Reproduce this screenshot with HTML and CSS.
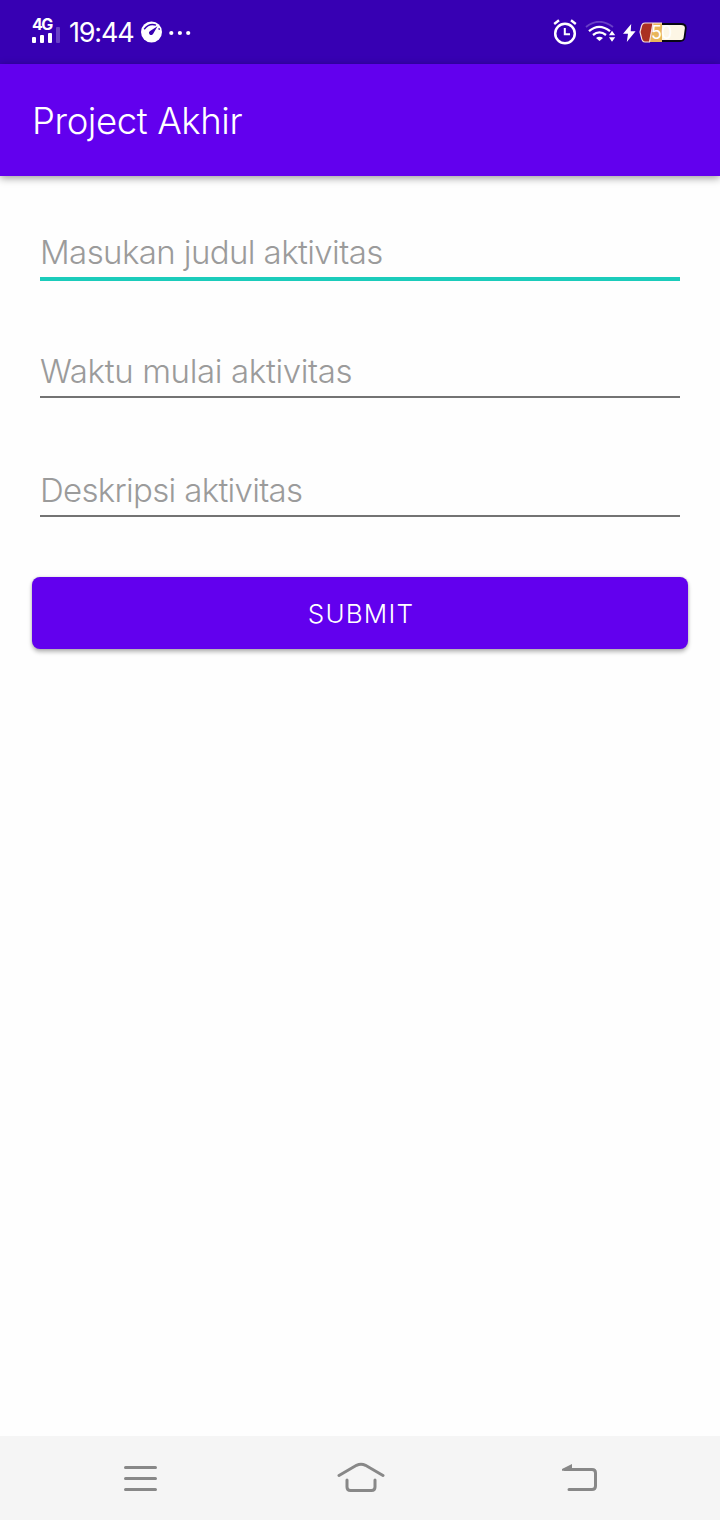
FILE: index.html
```html
<!DOCTYPE html>
<html lang="id">
<head>
<meta charset="utf-8">
<title>Project Akhir</title>
<link rel="stylesheet" href="styles.css">
</head>
<body>
<div class="screen">
  <div class="status-bar">
    <div class="status-left">
      <div class="network">
        <span class="network-type">4G</span>
        <svg class="signal" width="30" height="16" viewBox="0 0 30 16"><g fill="#fff"><rect x="0" y="10" width="4" height="6" rx="1"/><rect x="8" y="8" width="4" height="8" rx="1"/><rect x="16" y="6" width="4" height="10" rx="1"/></g><rect x="24" y="0" width="4" height="16" rx="1" fill="#fff" opacity=".25"/></svg>
      </div>
      <span class="clock">19:44</span>
      <svg class="gauge" width="22" height="22" viewBox="0 0 22 22"><circle cx="10.5" cy="11" r="10.5" fill="#fff"/><path d="M3.2 8.2Q8.3 1.7 15 4.2M17.8 7.2L18.5 8.7" fill="none" stroke="#3700b3" stroke-width="1.4"/><path d="M16.5 5.2L12.2 12.7A2.2 2.2 0 1 1 9.1 9.9Z" fill="#3700b3"/></svg>
      <svg class="dots" width="22" height="6" viewBox="0 0 22 6" fill="#fff"><circle cx="2.3" cy="3" r="2.1"/><circle cx="10.9" cy="3" r="2.1"/><circle cx="19.2" cy="3" r="2.1"/></svg>
    </div>
    <div class="status-right">
      <svg class="alarm" width="24" height="26" viewBox="0 0 24 26" fill="none" stroke="#fff"><circle cx="12" cy="14.5" r="9.8" stroke-width="2.5"/><path d="M11.8 9V15.2H17" stroke-width="2"/><path d="M1.2 5L6 1.3M22.8 5L18 1.3" stroke-width="2.4"/></svg>
      <svg class="wifi" width="32" height="22" viewBox="0 0 32 22" fill="none" stroke="#fff"><path d="M1 6Q14-4.5 28 6" stroke-width="1.8" opacity=".25"/><path d="M4 10.2Q14 1.5 25 10.2" stroke-width="2.3"/><path d="M8 14Q14.3 8.8 21 14" stroke-width="2.3"/><path d="M11 17Q14.5 14.5 18 17L14.5 20Z" fill="#fff" stroke="none"/><path d="M24 14.3L27 9.8L30.2 14.3ZM24 16.2H30.2L27 20.7Z" fill="#fff" stroke="none"/></svg>
      <svg class="bolt" width="13" height="18" viewBox="0 0 13 18"><path d="M8.2 0L0 9.7H5L3.8 18L12.6 7.3H7.7Z" fill="#fff"/></svg>
      <div class="battery">
        <svg width="48" height="21" viewBox="0 0 48 21"><path d="M9 2H42Q46.8 2 46.8 6L45.5 15.5Q45 19 41 19H9" fill="#fdf6e5" stroke="#080713" stroke-width="1.8"/><path d="M6 1H23V20H6Q3 20 2.3 15L1 10L2.3 5Q3 1 6 1Z" fill="#e9b65b"/><path d="M6 1H14L10.5 20H6Q3 20 2.3 15L1 10L2.3 5Q3 1 6 1Z" fill="#aa3022"/><path d="M14 1L10.5 20H6Q3 20 2.3 15L1 10L2.3 5Q3 1 6 1H23" fill="none" stroke="#f5dfda" stroke-width="1.2"/></svg>
        <span class="battery-level">50</span>
      </div>
    </div>
  </div>
  <header class="app-bar"><h1 class="title">Project Akhir</h1></header>
  <main class="form">
    <div class="field field-active"><span class="hint hint-title">Masukan judul aktivitas</span></div>
    <div class="field"><span class="hint hint-time">Waktu mulai aktivitas</span></div>
    <div class="field"><span class="hint hint-description">Deskripsi aktivitas</span></div>
    <button class="submit" type="button">SUBMIT</button>
  </main>
  <nav class="nav-bar">
    <svg width="34" height="28" viewBox="0 0 34 28" fill="none" stroke="#888" stroke-width="3" stroke-linecap="round"><path d="M1.5 3.5H31.5M1.5 14.5H31.5M1.5 25.5H31.5"/></svg>
    <svg class="nav-home" width="48" height="32" viewBox="0 0 48 32" fill="none" stroke="#888" stroke-width="3" stroke-linecap="round"><path d="M2 13.5L19.5 3.3Q24 1.2 28.5 3.3L46 13.5"/><path d="M10 18V25Q10 28.5 13.5 28.5H34.5Q38 28.5 38 25V18"/></svg>
    <svg width="36" height="28" viewBox="0 0 36 28" fill="none" stroke="#888" stroke-width="3" stroke-linecap="round"><path d="M3 5.5H30Q33.5 5.5 33.5 9V22Q33.5 25.5 30 25.5H7"/><path d="M0 5L10 0V6.8H0Z" fill="#888" stroke="none"/></svg>
  </nav>
</div>
</body>
</html>
```
FILE: styles.css
```css
* { box-sizing: border-box; }
body { margin: 0; background: #fff; font-family: Inter, "Liberation Sans", sans-serif; }
svg { display: block; flex: none; }
.screen { width: 720px; height: 1520px; display: flex; flex-direction: column; background: #fefefe; }
.status-bar { height: 64px; padding: 0 33px 0 31px; display: flex; justify-content: space-between; align-items: center; background: #3700b3; color: #fff; }
.status-left, .status-right { display: flex; align-items: center; }
.network { width: 30px; height: 26px; display: flex; flex-direction: column; margin-left: 1px; margin-bottom: 4px; }
.network-type { height: 10px; line-height: 15px; font-size: 16px; font-weight: 700; letter-spacing: -1.6px; }
.clock { margin-left: 7px; width: 66px; padding-top: 2px; font-size: 27px; line-height: 32px; font-weight: 420; letter-spacing: -1.2px; white-space: nowrap; }
.gauge { margin-left: 6px; }
.dots { margin-left: 6px; margin-top: 2px; }
.wifi { margin-left: 8px; }
.bolt { margin-left: 6px; margin-top: 2px; }
.battery { position: relative; margin-left: 3px; }
.battery-level { position: absolute; left: 12px; top: 1px; font-size: 18px; line-height: 19px; color: #fff; letter-spacing: -1px; }
.app-bar { position: relative; height: 112px; flex: none; display: flex; align-items: center; padding: 2px 32px 0; background: #6200ee; box-shadow: 0 2px 8px rgba(0, 0, 0, .4); }
.title { margin: 0; color: #fff; font-size: 36.5px; line-height: 44px; font-weight: 330; letter-spacing: -.4px; }
.form { flex: 1; display: flex; flex-direction: column; padding: 44px 32px 0; }
.field { height: 61px; margin: 0 8px 58px; display: flex; align-items: flex-start; padding-top: 12px; border-bottom: 4px solid #1bccbb; }
.field + .field { height: 59px; margin-bottom: 60px; border-bottom: 2px solid #737373; }
.hint { font-size: 33px; line-height: 40px; font-weight: 340; color: #9b9b9b; white-space: nowrap; letter-spacing: -.6px; }
.hint-time { letter-spacing: -.36px; }
.hint-description { letter-spacing: -.69px; }
.submit { height: 72px; padding: 2px 0 0 2px; border: 0; border-radius: 8px; background: #6200ee; color: #fff; font: 320 26px/32px Inter, sans-serif; letter-spacing: 1.2px; box-shadow: 0 3px 4px rgba(0, 0, 0, .28), 0 0 3px rgba(0, 0, 0, .15); }
.nav-bar { height: 84px; flex: none; display: flex; align-items: center; justify-content: space-between; padding: 0 122px 0 124px; background: #f5f5f5; }
.nav-home { margin-left: 1px; }
```
